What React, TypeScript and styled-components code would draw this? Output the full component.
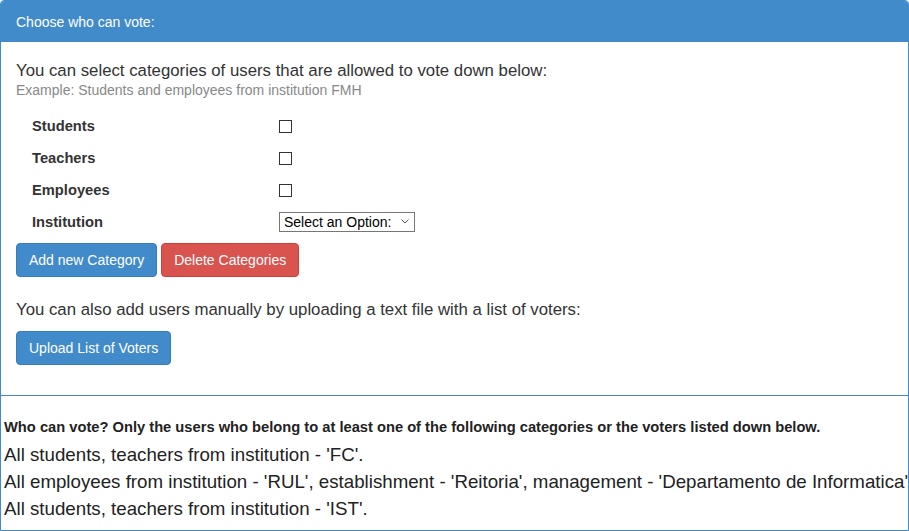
import React from "react";
import styled, { createGlobalStyle } from "styled-components";

const Global = createGlobalStyle`
  html, body { margin: 0; padding: 0; background: #fff; }
  body { font-family: "Liberation Sans", Arial, sans-serif; color: #333; }
  * { box-sizing: border-box; }
`;

const Panel = styled.div`
  width: 909px;
  border: 1px solid #428bca;
  border-top-left-radius: 4px;
  border-top-right-radius: 4px;
  overflow: hidden;
  background: #fff;
`;

const Heading = styled.div`
  background: #428bca;
  color: #fff;
  font-size: 14px;
  line-height: 20px;
  padding: 11px 15px 10px;
`;

const Body = styled.div`
  padding: 19px 15px 30px;
  border-bottom: 1px solid #428bca;
`;

const Lead = styled.p<{ $gap?: number }>`
  margin: ${(p) => p.$gap ?? 0}px 0 0;
  font-size: 16.8px;
  line-height: 20px;
  color: #333;
`;

const Hint = styled.p`
  margin: 0;
  font-size: 14px;
  line-height: 18px;
  color: #888;
`;

const Form = styled.div`
  display: grid;
  grid-template-columns: 247px auto;
  grid-auto-rows: 32px;
  margin: 11px 0 0 16px;
  align-items: center;
`;

const Label = styled.label`
  font-weight: bold;
  font-size: 14.7px;
  color: #333;
`;

const Check = styled.input`
  appearance: none;
  -webkit-appearance: none;
  margin: 0;
  width: 13px;
  height: 13px;
  border: 1px solid #333;
  border-radius: 0;
  background: #fff;
  justify-self: start;
`;

const SelectWrap = styled.div`
  position: relative;
  justify-self: start;
  width: 136px;
  height: 20px;
`;

const Select = styled.select`
  appearance: none;
  -webkit-appearance: none;
  font-family: "Liberation Sans", Arial, sans-serif;
  font-size: 14px;
  height: 20px;
  width: 136px;
  padding: 0 0 0 4px;
  border: 1px solid #767676;
  border-radius: 0;
  background: #fff;
  color: #000;
`;

const Chevron = styled.svg`
  position: absolute;
  right: 6px;
  top: 7px;
  width: 8px;
  height: 5px;
  pointer-events: none;
`;

const Actions = styled.div`
  display: flex;
  gap: 4px;
  margin-top: 5px;
`;

const Button = styled.button<{ $variant?: "primary" | "danger" }>`
  font-family: "Liberation Sans", Arial, sans-serif;
  font-size: 14px;
  line-height: 20px;
  padding: 6px 12px;
  border-radius: 4px;
  color: #fff;
  border: 1px solid ${(p) => (p.$variant === "danger" ? "#d43f3a" : "#357ebd")};
  background: ${(p) => (p.$variant === "danger" ? "#d9534f" : "#428bca")};
  cursor: pointer;
`;

const UploadRow = styled.div`
  margin-top: 11px;
`;

const Footer = styled.div`
  padding: 21px 3px 8px;
  white-space: nowrap;
`;

const FooterTitle = styled.h5`
  margin: 0 0 4px;
  font-size: 14.7px;
  line-height: 20px;
  font-weight: bold;
  color: #222;
`;

const Rule = styled.div`
  font-size: 18.72px;
  line-height: 27px;
  color: #222;
`;

export default function App() {
  return (
    <>
      <Global />
      <Panel>
        <Heading>Choose who can vote:</Heading>
        <Body>
          <Lead>You can select categories of users that are allowed to vote down below:</Lead>
          <Hint>Example: Students and employees from institution FMH</Hint>
          <Form>
            <Label>Students</Label>
            <Check type="checkbox" />
            <Label>Teachers</Label>
            <Check type="checkbox" />
            <Label>Employees</Label>
            <Check type="checkbox" />
            <Label>Institution</Label>
            <SelectWrap>
              <Select defaultValue="">
                <option value="">Select an Option:</option>
              </Select>
              <Chevron viewBox="0 0 8 5">
                <path d="M0.5 0.5 L4 4 L7.5 0.5" fill="none" stroke="#555" strokeWidth="1" />
              </Chevron>
            </SelectWrap>
          </Form>
          <Actions>
            <Button>Add new Category</Button>
            <Button $variant="danger">Delete Categories</Button>
          </Actions>
          <Lead $gap={23}>You can also add users manually by uploading a text file with a list of voters:</Lead>
          <UploadRow>
            <Button>Upload List of Voters</Button>
          </UploadRow>
        </Body>
        <Footer>
          <FooterTitle>
            Who can vote? Only the users who belong to at least one of the following categories or the voters listed down below.
          </FooterTitle>
          <Rule>All students, teachers from institution - 'FC'.</Rule>
          <Rule>
            All employees from institution - 'RUL', establishment - 'Reitoria', management - 'Departamento de Informatica'.
          </Rule>
          <Rule>All students, teachers from institution - 'IST'.</Rule>
        </Footer>
      </Panel>
    </>
  );
}
